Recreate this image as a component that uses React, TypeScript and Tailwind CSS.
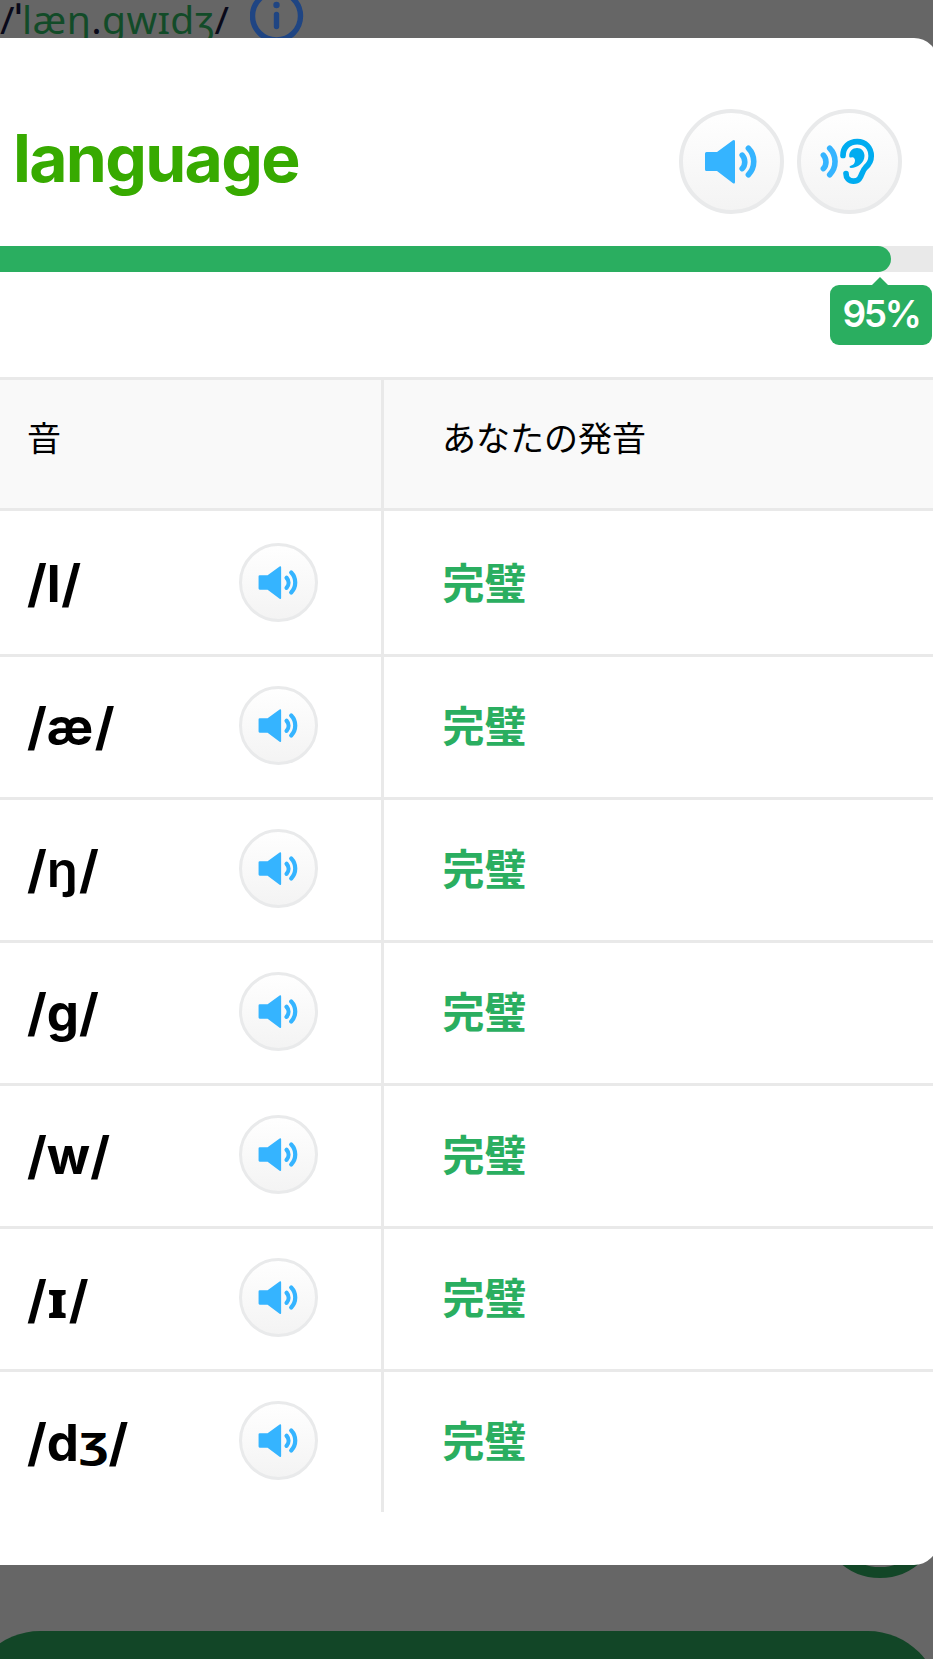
import React from 'react';

type Part = { text: string; className?: string };

const rows: { id: string; parts: Part[] }[] = [
  { id: 'l', parts: [{ text: 'l', className: 'tracking-[0.5px]' }] },
  { id: 'ae', parts: [{ text: 'æ', className: 'tracking-[1.5px]' }] },
  { id: 'ng', parts: [{ text: 'ŋ', className: 'inline-block origin-[50%_45%] scale-y-[0.95] pr-px font-semibold' }] },
  { id: 'g', parts: [{ text: 'g' }] },
  { id: 'w', parts: [{ text: 'w' }] },
  { id: 'i', parts: [{ text: 'ɪ', className: "inline-block origin-left scale-x-110 pr-[3px] font-['Noto_Sans'] font-extrabold" }] },
  {
    id: 'dz',
    parts: [{ text: 'd' }, { text: 'ʒ', className: "inline-block origin-[50%_42%] scale-y-[0.8] font-['Noto_Sans'] font-bold" }],
  },
];

function SpeakerIcon({ className }: { className?: string }) {
  return (
    <svg viewBox="0 0 105 105" className={className} fill="none">
      <path
        d="M27.5 43H38L54 31.3Q56 30.3 56 32.5V73Q56 75.2 54 74.2L38 62H27.5Q26 62 26 60.5V44.5Q26 43 27.5 43Z"
        fill="#35b4ff"
      />
      <path
        d="M63.2 46.2A10 10 0 0 1 63.2 59.6M69.4 39.3A19 19 0 0 1 69.4 65.7"
        stroke="#35b4ff"
        strokeWidth="5.6"
        strokeLinecap="round"
      />
    </svg>
  );
}

function EarIcon({ className }: { className?: string }) {
  return (
    <svg viewBox="0 0 105 105" className={className} fill="none">
      <path
        d="M26.4 46.2A10 10 0 0 1 26.4 59.6M32.7 39.3A19 19 0 0 1 32.7 65.7"
        stroke="#35b4ff"
        strokeWidth="5.6"
        strokeLinecap="round"
      />
      <path
        d="M46 46.5C46 38 52 32.6 60.2 32.6C68.5 32.6 74.2 38.5 74.2 47C74.2 52 72 55.5 68.5 58.5C63.5 63 65.5 72.1 56.5 72.1C52 72.1 49 69 49 64.5"
        stroke="#00acf0"
        strokeWidth="5.7"
        strokeLinecap="round"
      />
      <path
        d="M52.2 47C52.2 42.5 55.5 39 60 39C64.5 39 67.5 42.5 67.5 46.8C67.5 54 60.5 59 53.8 59C52.2 58.8 52.2 57.2 53.6 56.8C56.4 56 58 54 58 51.4C58 49 56.3 47.6 54.3 48.4C53.4 48.8 52.2 48.4 52.2 47Z"
        fill="#00acf0"
      />
    </svg>
  );
}

function RoundButton({ label, className, children }: { label: string; className: string; children: React.ReactNode }) {
  return (
    <button
      aria-label={label}
      className={`shrink-0 rounded-full border-[#e9eaeb] bg-linear-to-b from-white to-[#f3f3f3] bg-origin-border ${className}`}
    >
      {children}
    </button>
  );
}

export default function App() {
  return (
    <div className="relative h-[1659px] w-[933px] overflow-hidden bg-[#666666] font-['Inter','Noto_Sans_CJK_JP',sans-serif]">
      {/* Page behind the dialog */}
      <div className="flex h-[38px] items-start overflow-hidden">
        <p className="-mt-[7px] w-[250px] font-['Noto_Sans',sans-serif] text-[39px] leading-[52px] tracking-[0.4px] whitespace-nowrap text-[#090919]">
          /<span className="font-semibold">ˈ</span>
          <span className="text-[#124b28]">læŋ</span>.<span className="text-[#124b28]">gwɪdʒ</span>/
        </p>
        <svg viewBox="0 0 54 54" className="-mt-[11px] size-[54px] shrink-0" fill="none" stroke="#1f4583">
          <circle cx="26.5" cy="27" r="24" strokeWidth="5.4" />
          <path d="M26.5 25.5V37.5" strokeWidth="5.4" strokeLinecap="round" />
          <circle cx="26.5" cy="16" r="3.2" fill="#1f4583" stroke="none" />
        </svg>
      </div>
      <div className="absolute top-[1458px] left-[820px] size-[120px] rounded-full border-[11px] border-[#124627]" />
      <div className="absolute top-[1631px] -left-8 h-40 w-[972px] rounded-[72px] bg-[#124627]" />

      {/* Dialog */}
      <div className="relative h-[1527px] w-[938px] rounded-r-[24px] bg-white pt-[71px]">
        <div className="flex h-[105px] w-[933px] items-center gap-[13px] pr-[31px] pl-[13px]">
          <h1 className="flex-1 pb-[7px] text-[66px] leading-none font-bold tracking-[-1.7px] text-[#37aa00]">language</h1>
          <RoundButton label="Listen" className="size-[105px] border-4">
            <SpeakerIcon className="-m-1 size-[105px]" />
          </RoundButton>
          <RoundButton label="Hear yourself" className="size-[105px] border-4">
            <EarIcon className="-m-1 size-[105px]" />
          </RoundButton>
        </div>

        {/* Score */}
        <div className="relative mt-8 h-[26px] w-[933px] bg-[#e9e9e9]">
          <div className="h-full w-[891px] rounded-r-full bg-[#2aae60]" />
          <div className="absolute top-[39px] left-[830px] flex h-[60px] w-[102px] items-center justify-center rounded-[9px] bg-[#2aae60] pb-[2px] text-[37px] font-semibold tracking-[-2.4px] text-white">
            <svg viewBox="0 0 18 9" className="absolute -top-2 left-[41px] h-[9px] w-[18px]">
              <path d="M0 9L9 0L18 9Z" fill="#2aae60" />
            </svg>
            95%
          </div>
        </div>

        {/* Phoneme table */}
        <div className="mt-[105px] w-[933px]">
          <div className="flex h-[134px] border-y-[3px] border-[#e9e9e9] bg-[#f9f9f9] text-[34px] leading-[50px] text-black">
            <div className="w-[384px] border-r-[3px] border-[#e9e9e9] pt-[34px] pl-[27px]">音</div>
            <div className="pt-[34px] pl-[58px]">あなたの発音</div>
          </div>
          {rows.map((row, i) => (
            <div key={row.id} className={`flex h-[143px] border-[#e9e9e9] ${i > 0 ? 'border-t-[3px]' : ''}`}>
              <div
                className={`flex w-[384px] items-center justify-between border-r-[3px] border-[#e9e9e9] pr-[63px] pl-[27px] ${i > 0 ? 'pb-[3px]' : ''}`}
              >
                <span className="pt-[2px] text-[51px] leading-none font-bold whitespace-nowrap text-black">
                  /
                  {row.parts.map((p) => (
                    <span key={p.text} className={p.className}>
                      {p.text}
                    </span>
                  ))}
                  /
                </span>
                <RoundButton label="Play sound" className="size-[79px] border-[3px]">
                  <SpeakerIcon className="-m-[3px] size-[79px]" />
                </RoundButton>
              </div>
              <div
                className={`flex items-center pl-[58.5px] text-[42px] leading-none font-bold text-[#2aae60] ${i > 0 ? 'pb-[3px]' : ''}`}
              >
                <span className="pt-[3px]">完璧</span>
              </div>
            </div>
          ))}
        </div>
      </div>
    </div>
  );
}
